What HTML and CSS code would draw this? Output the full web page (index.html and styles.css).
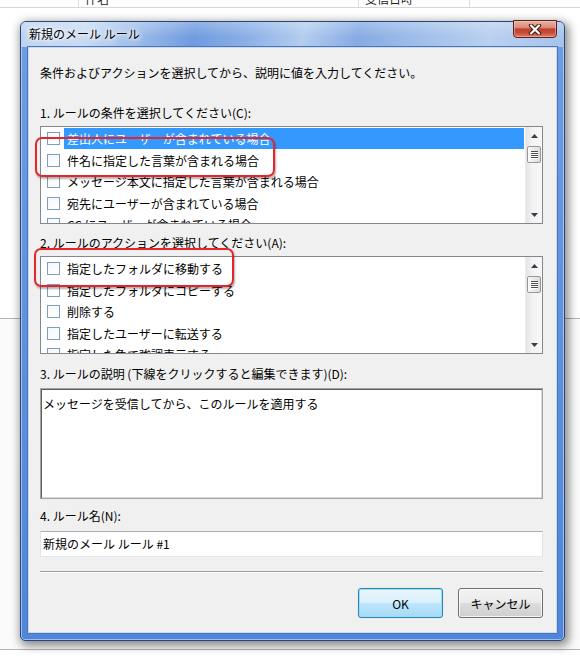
FILE: index.html
```html
<!DOCTYPE html>
<html lang="ja">
<head>
<meta charset="utf-8">
<title>新規のメール ルール</title>
<link rel="stylesheet" href="styles.css">
</head>
<body>
<div class="desktop">
  <div class="msglist-head">
    <div class="hcell w-icons"></div>
    <div class="hcell w-subject"><span>件名</span></div>
    <div class="hcell w-date"><span>受信日時</span></div>
    <div class="hcell w-rest"></div>
  </div>
  <div class="pane upper"></div>
  <div class="pane lower"></div>
</div>

<div class="window">
  <div class="titlebar">
    <span class="title">新規のメール ルール</span>
    <button class="close" aria-label="閉じる">
      <svg width="14" height="11" viewBox="0 0 14 11">
        <path d="M3 1.5 L11 9.5 M11 1.5 L3 9.5" stroke="#3a1712" stroke-width="4.2" stroke-linecap="round" fill="none"/>
        <path d="M3 1.5 L11 9.5 M11 1.5 L3 9.5" stroke="#ffffff" stroke-width="2.2" stroke-linecap="round" fill="none"/>
      </svg>
    </button>
  </div>

  <div class="client">
    <p class="intro">条件およびアクションを選択してから、説明に値を入力してください。</p>

    <div class="label first">1. ルールの条件を選択してください(C):</div>
    <div class="listbox">
      <ul class="items">
        <li class="item selected"><span class="check"></span><span class="text">差出人にユーザーが含まれている場合</span></li>
        <li class="item"><span class="check"></span><span class="text">件名に指定した言葉が含まれる場合</span></li>
        <li class="item"><span class="check"></span><span class="text">メッセージ本文に指定した言葉が含まれる場合</span></li>
        <li class="item"><span class="check"></span><span class="text">宛先にユーザーが含まれている場合</span></li>
        <li class="item"><span class="check"></span><span class="text">CC にユーザーが含まれている場合</span></li>
      </ul>
      <div class="scrollbar">
        <div class="sb-btn"><svg width="7" height="4" viewBox="0 0 7 4"><path d="M0 4 L3.5 0 L7 4 Z" fill="#3c3c3c"/></svg></div>
        <div class="sb-track"><div class="sb-thumb"><i></i><i></i><i></i><i></i></div></div>
        <div class="sb-btn"><svg width="7" height="4" viewBox="0 0 7 4"><path d="M0 0 L7 0 L3.5 4 Z" fill="#3c3c3c"/></svg></div>
      </div>
    </div>

    <div class="label">2. ルールのアクションを選択してください(A):</div>
    <div class="listbox">
      <ul class="items">
        <li class="item"><span class="check"></span><span class="text">指定したフォルダに移動する</span></li>
        <li class="item"><span class="check"></span><span class="text">指定したフォルダにコピーする</span></li>
        <li class="item"><span class="check"></span><span class="text">削除する</span></li>
        <li class="item"><span class="check"></span><span class="text">指定したユーザーに転送する</span></li>
        <li class="item"><span class="check"></span><span class="text">指定した色で強調表示する</span></li>
      </ul>
      <div class="scrollbar">
        <div class="sb-btn"><svg width="7" height="4" viewBox="0 0 7 4"><path d="M0 4 L3.5 0 L7 4 Z" fill="#3c3c3c"/></svg></div>
        <div class="sb-track"><div class="sb-thumb"><i></i><i></i><i></i><i></i></div></div>
        <div class="sb-btn"><svg width="7" height="4" viewBox="0 0 7 4"><path d="M0 0 L7 0 L3.5 4 Z" fill="#3c3c3c"/></svg></div>
      </div>
    </div>

    <div class="label gap3">3. ルールの説明 (下線をクリックすると編集できます)(D):</div>
    <div class="description">メッセージを受信してから、このルールを適用する</div>

    <div class="label gap4">4. ルール名(N):</div>
    <div class="namebox">新規のメール ルール #1</div>

    <div class="separator"></div>

    <div class="buttons">
      <button class="btn default">OK</button>
      <button class="btn">キャンセル</button>
    </div>
  </div>

  <div class="mark m1"></div>
  <div class="mark m2"></div>
</div>
</body>
</html>
```

FILE: styles.css
```css
html, body {
  margin: 0;
  padding: 0;
}

body {
  width: 580px;
  height: 660px;
  overflow: hidden;
  background: #ffffff;
  font-family: "Noto Sans CJK JP", "Noto Sans", sans-serif;
  font-size: 12px;
  color: #000;
  position: relative;
}

/* ---------- background application ---------- */
.desktop {
  display: flex;
  flex-direction: column;
}

.msglist-head {
  display: flex;
  height: 7px;
  border-bottom: 1px solid #d6d6d6;
  overflow: hidden;
}

.hcell {
  border-right: 1px solid #dcdcdc;
  overflow: hidden;
  color: #222;
}

.hcell span {
  display: block;
  line-height: 14px;
  margin-top: -8px;
  padding-left: 6px;
}

.w-icons { width: 78px; }
.w-subject { width: 279px; }
.w-date { width: 110px; }
.w-rest { flex: 1; border-right: none; }

.pane.upper {
  height: 310px;
  border-bottom: 1px solid #b5b5b5;
}

.pane.lower {
  height: 330px;
  border-bottom: 1px solid #b5b5b5;
  background: #fbfbfb;
}

/* ---------- dialog window ---------- */
.window {
  position: absolute;
  left: 20px;
  top: 21px;
  width: 545px;
  height: 620px;
  box-sizing: border-box;
  border: 1px solid #26467a;
  border-radius: 6px 6px 5px 5px;
  padding: 0 7px 7px;
  display: flex;
  flex-direction: column;
  background: linear-gradient(to bottom, #6e9de3, #5b8fde 60%, #4f86db);
  box-shadow: inset 0 0 0 1px rgba(255, 255, 255, 0.45), 2px 3px 10px 2px rgba(0, 0, 0, 0.45);
}

.titlebar {
  height: 25px;
  margin: 0 -7px;
  padding: 0 7px;
  display: flex;
  justify-content: space-between;
  align-items: flex-start;
  border-radius: 5px 5px 0 0;
  background:
    linear-gradient(to bottom, rgba(255, 255, 255, 0.25), rgba(255, 255, 255, 0) 60%),
    linear-gradient(100deg, #bcd2ef 0%, #c9dbf3 12%, #9bbbe8 22%, #6f9bdf 32%, #8cb0e6 42%, #b4cdef 52%, #86abe3 62%, #9dbce9 72%, #b9d0ef 86%, #a6c3eb 100%);
}

.title {
  line-height: 24px;
  padding-left: 1px;
  color: #000;
  text-shadow: 0 0 6px #ffffff, 0 0 3px #ffffff, 0 0 10px rgba(255, 255, 255, 0.9);
}

.close {
  width: 44px;
  height: 18px;
  margin-top: -2px;
  padding: 0;
  border: 1px solid #5b2018;
  border-radius: 0 0 4px 4px;
  display: flex;
  align-items: center;
  justify-content: center;
  background: linear-gradient(to bottom, #eab0a3 0%, #d98d7c 40%, #c2402d 50%, #c64a35 72%, #de7b62 100%);
  box-shadow: inset 0 0 0 1px rgba(255, 210, 200, 0.45);
}

.client {
  flex: 1;
  display: flex;
  flex-direction: column;
  background: #f0f0f0;
  border: 1px solid #c9d9ef;
  box-shadow: 0 0 0 1px #4c76b3;
  padding: 17px 13px 0 11px;
}

.intro {
  margin: 0;
  line-height: 16px;
}

.label {
  line-height: 16px;
  margin-top: 11px;
}

.label.first { margin-top: 24px; }
.label.gap3 { margin-top: 12px; }
.label.gap4 { margin-top: 9px; }

/* ---------- list boxes ---------- */
.listbox {
  margin-top: 5px;
  height: 98px;
  box-sizing: border-box;
  border: 1px solid #828790;
  background: #ffffff;
  display: flex;
}

.items {
  flex: 1;
  margin: 0;
  padding: 1px 1px 0 0;
  list-style: none;
  overflow: hidden;
}

.item {
  height: 21.5px;
  display: flex;
  align-items: center;
  white-space: nowrap;
}

.check {
  width: 13px;
  height: 13px;
  box-sizing: border-box;
  margin-left: 6px;
  margin-right: 4px;
  border: 1px solid #7d9fbf;
  background: linear-gradient(135deg, #f4f7fa, #ffffff);
  flex: none;
}

.text {
  flex: 1;
  height: 21px;
  line-height: 21px;
  padding-left: 3px;
}

.item.selected .text {
  background: #3399ff;
  color: #ffffff;
}

.scrollbar {
  width: 17px;
  display: flex;
  flex-direction: column;
  background: linear-gradient(to right, #e4e4e4, #f3f3f3 40%, #f7f7f7);
  border-left: 1px solid #ececec;
  box-sizing: border-box;
}

.sb-btn {
  height: 17px;
  display: flex;
  align-items: center;
  justify-content: center;
}

.sb-track {
  flex: 1;
}

.sb-thumb {
  width: 14px;
  height: 17px;
  margin: 2px auto 0;
  box-sizing: border-box;
  border: 1px solid #979797;
  border-radius: 2px;
  background: linear-gradient(to right, #fbfbfb, #e9e9e9 50%, #dcdcdc);
  display: flex;
  flex-direction: column;
  align-items: center;
  justify-content: center;
  gap: 1px;
}

.sb-thumb i {
  display: block;
  width: 7px;
  height: 1px;
  background: #4c4c4c;
  box-shadow: 0 1px 0 #ffffff;
}

/* ---------- description & name ---------- */
.description {
  margin-top: 6px;
  height: 111px;
  box-sizing: border-box;
  border: 1px solid #a3a3a3;
  box-shadow: inset 1px 1px 0 #5f5f5f, inset -1px -1px 0 #dadada;
  background: #ffffff;
  padding: 7px 2px 0 2px;
  line-height: 16px;
}

.namebox {
  margin-top: 7px;
  height: 26px;
  box-sizing: border-box;
  border: 1px solid;
  border-color: #abadb3 #e2e3ea #e3e9ef #e2e3ea;
  background: #ffffff;
  padding-left: 2px;
  line-height: 24px;
}

.separator {
  margin-top: 14px;
  height: 1px;
  background: #a0a0a0;
  border-bottom: 1px solid #ffffff;
}

.buttons {
  margin-top: 15px;
  display: flex;
  justify-content: flex-end;
  gap: 15px;
}

.btn {
  width: 85px;
  height: 30px;
  padding: 0;
  font: inherit;
  color: #000;
  border: 1px solid #707070;
  border-radius: 3px;
  background: linear-gradient(to bottom, #f2f2f2 0%, #ebebeb 50%, #dddddd 50%, #cfcfcf 100%);
  box-shadow: inset 0 0 0 1px rgba(255, 255, 255, 0.75);
}

.btn.default {
  border-color: #3c7fb1;
  background: linear-gradient(to bottom, #eaf6fd 0%, #d9f0fc 50%, #bee6fd 50%, #a7d9f5 100%);
  box-shadow: inset 0 0 0 1px #8fe4fb, 0 0 1px rgba(60, 127, 177, 0.4);
}

/* ---------- red annotation frames ---------- */
.mark {
  position: absolute;
  border: 2px solid #e5252b;
  border-radius: 7px;
  box-shadow: 1px 2px 2px rgba(0, 0, 0, 0.3);
}

.mark.m1 {
  left: 14px;
  top: 115px;
  width: 236px;
  height: 36px;
}

.mark.m2 {
  left: 13px;
  top: 226px;
  width: 196px;
  height: 35px;
}
```
